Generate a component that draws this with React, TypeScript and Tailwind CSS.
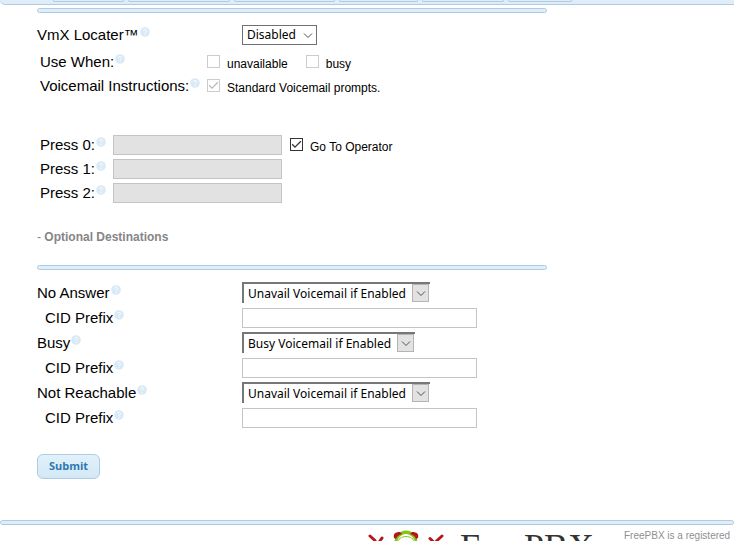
import { useState } from 'react'

const SANS = "font-['Liberation_Sans',Arial,sans-serif]"

/** Bottom edges of the navigation buttons, widths in px. */
const NAV_TABS = [
  { label: 'Admin', className: 'w-[71px]' },
  { label: 'Applications', className: 'w-[102px]' },
  { label: 'Connectivity', className: 'w-[101px]' },
  { label: 'Reports', className: 'w-[79px]' },
  { label: 'Settings', className: 'w-[82px]' },
  { label: 'UCP', className: 'w-[64px]' },
]

const DESTINATIONS = [
  { id: 'noanswer', label: 'No Answer', value: 'Unavail Voicemail if Enabled', width: 'w-[188px]' },
  { id: 'busy', label: 'Busy', value: 'Busy Voicemail if Enabled', width: 'w-[173px]' },
  { id: 'unreachable', label: 'Not Reachable', value: 'Unavail Voicemail if Enabled', width: 'w-[188px]' },
]

function Help() {
  return (
    <svg viewBox="0 0 10 10" className="mb-1.5 ml-px size-2.5 shrink-0" aria-hidden>
      <circle cx="5" cy="5" r="4.8" fill="#d9eaf6" />
      <path d="M3.6 3.8c0-1.9 2.9-1.8 2.9-.1C6.5 4.8 5 4.7 5 6M5 7v1" fill="none" stroke="#fff" strokeWidth="0.9" />
    </svg>
  )
}

function Label({ htmlFor, text }: { htmlFor: string; text: string }) {
  return (
    <label htmlFor={htmlFor} className="flex items-center whitespace-nowrap text-[15px] leading-5">
      {text}
      <Help />
    </label>
  )
}

function Divider({ className }: { className: string }) {
  return <hr className={`h-[5px] rounded-full border border-[#aecbe3] bg-[#deedf8] ${className}`} />
}

function Chevron({ className }: { className: string }) {
  return (
    <svg viewBox="0 0 10 10" className={className} fill="none" stroke="#505050" aria-hidden>
      <path d="M1 3.5l4 4 4-4" />
    </svg>
  )
}

function Check({ id, text, checked, disabled }: { id: string; text: string; checked?: boolean; disabled?: boolean }) {
  const [on, setOn] = useState(!!checked)
  return (
    <div className="flex items-center">
      <span className="relative mb-px size-[13px] shrink-0">
        <input
          id={id}
          type="checkbox"
          checked={on}
          disabled={disabled}
          onChange={e => setOn(e.target.checked)}
          className="block size-[13px] appearance-none border border-[#333] bg-white disabled:border-[#ccc]"
        />
        {on && (
          <svg
            viewBox="0 0 13 13"
            className="pointer-events-none absolute inset-0 size-[13px]"
            fill="none"
            stroke={disabled ? '#bbb' : '#333'}
            strokeWidth="1.3"
            aria-hidden
          >
            <path d="M2.2 6.3l2.8 2.8 5.8-5.8" />
          </svg>
        )}
      </span>
      <label htmlFor={id} className="ml-[7px] mt-1 whitespace-nowrap text-xs leading-4">{text}</label>
    </div>
  )
}

function Destination({ id, label, value, width }: (typeof DESTINATIONS)[number]) {
  return (
    <>
      <div className="flex h-[25px] items-center">
        <div className="w-[205px] shrink-0">
          <Label htmlFor={id} text={label} />
        </div>
        <div className={`relative ${width}`}>
          <select
            id={id}
            className="block h-[21px] w-full appearance-none border-l-2 border-t-2 border-[#777] bg-white pl-1 font-['Noto_Sans',sans-serif] text-xs"
          >
            <option>{value}</option>
          </select>
          <span className="pointer-events-none absolute bottom-px right-px flex h-[18px] w-[17px] items-center justify-center border border-[#b4b4b4] bg-[#e2e2e2]">
            <Chevron className="size-2.5" />
          </span>
        </div>
      </div>
      <div className="flex h-[25px] items-center">
        <div className="w-[205px] shrink-0 pl-2">
          <Label htmlFor={`${id}-cid`} text="CID Prefix" />
        </div>
        <input id={`${id}-cid`} type="text" className="h-5 w-[235px] border border-[#c4c4c4] px-1 text-xs" />
      </div>
    </>
  )
}

function Logo() {
  return (
    <div className="flex shrink-0 items-start">
      <svg viewBox="0 0 76 32" className="mt-1 h-8 w-[76px] shrink-0" aria-hidden>
        <g fill="none" stroke="#b9151b" strokeWidth="3" strokeLinecap="round">
          <path d="M2 7l5 4.500M14 9l-3.500 5M62 9.500l4 4M74 7l-5.500 5" />
        </g>
        <ellipse cx="38" cy="16" rx="12" ry="14.5" fill="#86c514" />
        <path d="M26 9c-1-4 1-6 6-6l2 2c-3 1-5 2-6 5z" fill="#b3161b" />
        <path d="M50 9c1-4-1-6-6-6l-2 2c3 1 5 2 6 5z" fill="#b3161b" />
        <ellipse cx="38" cy="18" rx="10" ry="13" fill="#fff" />
        <path d="M29 15c1-10 17-10 18 0" fill="none" stroke="#86c514" />
      </svg>
      <span className="ml-4 mt-1 font-['Liberation_Serif',serif] text-4xl leading-9 text-[#333]">FreePBX</span>
    </div>
  )
}

export default function App() {
  return (
    <div className={`min-h-screen overflow-x-hidden bg-white text-black ${SANS}`}>
      <nav className="flex h-[5px] gap-1 rounded-bl-lg border-b border-[#aecbe3] bg-[#deedf8] pl-[53px]">
        {NAV_TABS.map(tab => (
          <button
            key={tab.label}
            aria-label={tab.label}
            className={`h-0.5 rounded-b-md border border-t-0 border-[#aecbe3] bg-[#deedf8] ${tab.className}`}
          />
        ))}
      </nav>

      <form className="pl-[37px]" onSubmit={e => e.preventDefault()}>
        <Divider className="mt-[3px] w-[510px]" />

        <div className="mt-3 flex h-5 items-center">
          <div className="w-[205px] shrink-0">
            <Label htmlFor="vmx" text="VmX Locater™" />
          </div>
          <div className="relative w-[75px]">
            <select id="vmx" className="block h-5 w-full appearance-none border border-[#707070] bg-white pl-1 font-['Noto_Sans',sans-serif] text-xs">
              <option>Disabled</option>
              <option>Enabled</option>
            </select>
            <Chevron className="pointer-events-none absolute right-1 top-[5px] size-2.5" />
          </div>
        </div>

        <div className="mt-[5px] flex h-6 items-center pl-[3px]">
          <div className="w-[167px] shrink-0">
            <Label htmlFor="unavailable" text="Use When:" />
          </div>
          <div className="flex gap-[18px]">
            <Check id="unavailable" text="unavailable" disabled />
            <Check id="whenbusy" text="busy" disabled />
          </div>
        </div>
        <div className="flex h-6 items-center pl-[3px]">
          <div className="w-[167px] shrink-0">
            <Label htmlFor="standard" text="Voicemail Instructions:" />
          </div>
          <Check id="standard" text="Standard Voicemail prompts." checked disabled />
        </div>

        <div className="mt-[35px] pl-[3px]">
          {[0, 1, 2].map(n => (
            <div key={n} className="flex h-6 items-center">
              <div className="w-[73px] shrink-0">
                <Label htmlFor={`press${n}`} text={`Press ${n}:`} />
              </div>
              <input id={`press${n}`} type="text" disabled className="mr-2 h-5 w-[169px] border border-[#c4c4c4] bg-[#e2e2e2]" />
              {n === 0 && <Check id="operator" text="Go To Operator" checked />}
            </div>
          ))}
        </div>

        <h5 className="mt-6 text-xs font-bold leading-4 text-[#858585]">
          <span className="font-normal">- </span>Optional Destinations
        </h5>

        <Divider className="mb-2.5 mt-5 w-[510px]" />

        {DESTINATIONS.map(d => <Destination key={d.id} {...d} />)}

        <button
          type="submit"
          className="mt-6 h-[25px] w-[63px] rounded-md border border-[#aecbe3] bg-linear-to-b from-[#e2f1fb] to-[#d3e8f6] font-['Open_Sans',sans-serif] text-[11px] font-bold text-[#2e79b0]"
        >
          Submit
        </button>
      </form>

      <footer className="mt-[41px]">
        <Divider className="w-full" />
        <div className="flex items-start pl-[368px]">
          <Logo />
          <p className="ml-[30px] mt-[3px] whitespace-nowrap text-[10px] leading-4 text-[#8f8f8f]">FreePBX is a registered</p>
        </div>
      </footer>
    </div>
  )
}
